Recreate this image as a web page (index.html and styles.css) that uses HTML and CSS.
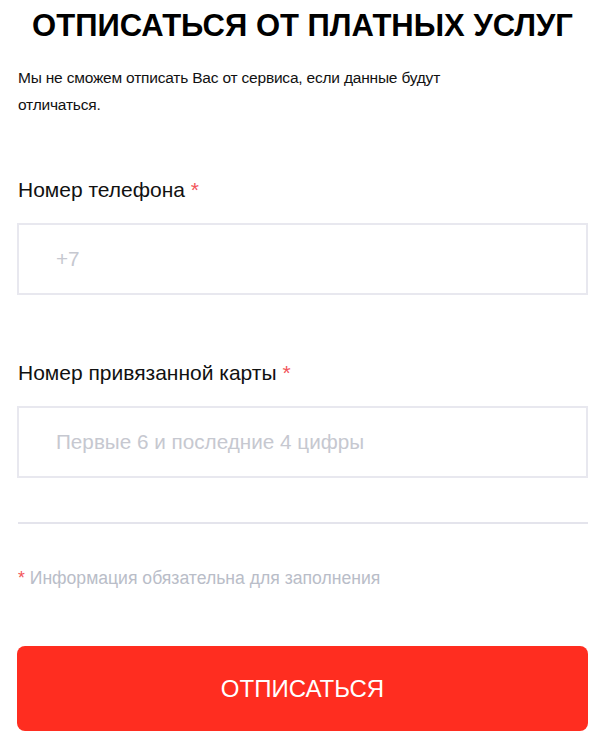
FILE: index.html
```html
<!DOCTYPE html>
<html lang="ru">
<head>
<meta charset="UTF-8">
<meta name="viewport" content="width=device-width, initial-scale=1.0">
<title>Отписаться от платных услуг</title>
<link rel="stylesheet" href="styles.css">
</head>
<body>
<div class="container">
  <h1 class="title">ОТПИСАТЬСЯ ОТ ПЛАТНЫХ УСЛУГ</h1>
  <p class="intro">Мы не сможем отписать Вас от сервиса, если данные будут отличаться.</p>

  <form class="form" onsubmit="return false;">
    <div class="field">
      <label class="label" for="phone">Номер телефона <span class="req">*</span></label>
      <input class="input" id="phone" type="tel" placeholder="+7">
    </div>
    <div class="field">
      <label class="label" for="card">Номер привязанной карты <span class="req">*</span></label>
      <input class="input" id="card" type="text" placeholder="Первые 6 и последние 4 цифры">
    </div>

    <hr class="divider">

    <p class="note"><span class="req">*</span> Информация обязательна для заполнения</p>

    <button class="submit" type="submit">ОТПИСАТЬСЯ</button>
  </form>
</div>
</body>
</html>
```

FILE: styles.css
```css
body {
  margin: 0;
  background: #fff;
  font-family: "Liberation Sans", Arial, sans-serif;
  color: #111;
}
.container {
  padding: 8px 12px 0 17px;
}
.title {
  margin: 0;
  font-size: 31px;
  line-height: 36px;
  font-weight: bold;
  text-align: center;
  color: #000;
}
.intro {
  max-width: 490px;
  margin: 20px 0 0 1px;
  font-size: 15.5px;
  line-height: 27px;
  letter-spacing: -0.2px;
}
.form {
  margin-top: 60px;
}
.field {
  margin-bottom: 66px;
}
.field:last-of-type {
  margin-bottom: 44px;
}
.label {
  display: block;
  margin: 0 0 21px 1px;
  font-size: 21px;
  line-height: 24px;
}
.req {
  color: #f2555a;
}
.input {
  display: block;
  box-sizing: border-box;
  width: 100%;
  height: 72px;
  padding: 0 37px;
  border: 2px solid #e8e8ef;
  border-radius: 0;
  font-family: "Liberation Sans", Arial, sans-serif;
  font-size: 20.7px;
  color: #222;
  outline: none;
}
.input::placeholder {
  color: #c6c8d0;
}
.divider {
  margin: 0 0 0 1px;
  height: 2px;
  border: 0;
  background: #e4e4ec;
}
.note {
  margin: 43px 0 0 1px;
  font-size: 17.6px;
  line-height: 22px;
  color: #b9bdc8;
}
.submit {
  display: block;
  width: 100%;
  height: 85px;
  margin-top: 57px;
  border: 0;
  border-radius: 8px;
  background: #ff2d20;
  color: #fff;
  font-family: "Liberation Sans", Arial, sans-serif;
  font-size: 24px;
  cursor: pointer;
}
```
